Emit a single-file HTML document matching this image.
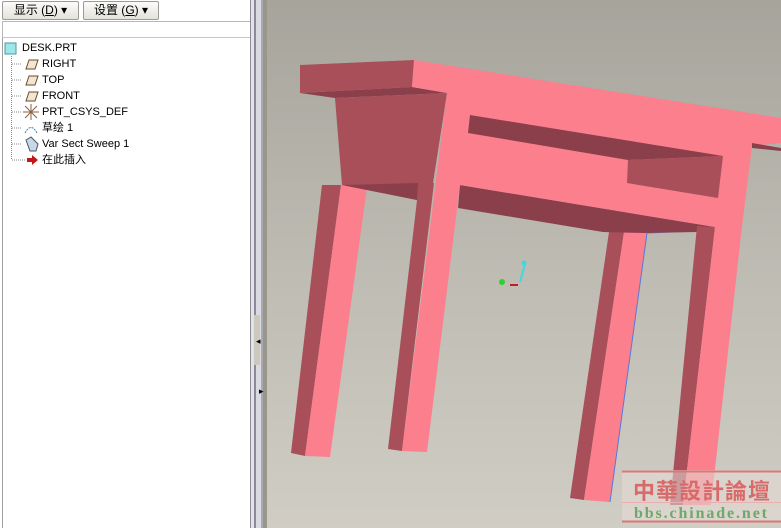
<!DOCTYPE html>
<html><head><meta charset="utf-8"><style>
*{margin:0;padding:0;box-sizing:border-box}
body{width:781px;height:528px;overflow:hidden;position:relative;background:#fff;font-family:"Liberation Sans","Noto Sans CJK SC",sans-serif;font-size:11px}
.btn{position:absolute;top:1px;height:19px;border:1px solid #9a9a9a;border-radius:2px;background:linear-gradient(#fbfbf8,#e4e2da);font-size:12px;line-height:17px;text-align:center;color:#000}
.tree{position:absolute;left:2px;top:37px;width:248px;height:491px;border-left:1px solid #a0a0a0;border-top:1px solid #c8c8c8}
.hdr{position:absolute;left:2px;top:21px;width:248px;height:17px;border:1px solid #b8b8b8;border-right:none;background:#fff}
.it{position:absolute;left:42px;height:14px;line-height:14px;white-space:nowrap}
.vp{position:absolute;left:267px;top:0;width:514px;height:528px;background:linear-gradient(#a6a49b,#bdbbb2 50%,#d0cdc4)}
</style></head><body>
<div class="btn" style="left:2px;width:77px">显示 (<u>D</u>) ▾</div>
<div class="btn" style="left:83px;width:76px">设置 (<u>G</u>) ▾</div>
<div class="hdr"></div>
<div class="tree"></div>
<svg style="position:absolute;left:0;top:0" width="250" height="170">
<g stroke="#888" stroke-dasharray="1,1" fill="none"><path d="M11.5 56V160M12 64H22M12 80H22M12 96H22M12 112H22M12 128H22M12 144H22M12 160H26"/></g>
<rect x="5" y="43" width="11" height="11" fill="#9ee6ea" stroke="#4a9aa0"/>
<g fill="#f3e6d0" stroke="#6a4a30"><path d="M26 69L29 60H38L35 69Z"/><path d="M26 85L29 76H38L35 85Z"/><path d="M26 101L29 92H38L35 101Z"/></g>
<g stroke="#8a6040" stroke-width="1"><path d="M25 106L37 118M37 106L25 118M31 104V120M23 112H39"/></g>
<path d="M25 133Q31 122 37 133" fill="none" stroke="#2a8ab0" stroke-dasharray="2,1"/>
<path d="M26 140L31 137L38 144L36 151L30 151Z" fill="#c8d8e8" stroke="#456"/>
<path d="M27 158H32V155L38 160L32 165V162H27Z" fill="#c01818"/>
</svg>
<div class="it" style="left:22px;top:41px">DESK.PRT</div>
<div class="it" style="top:57px">RIGHT</div>
<div class="it" style="top:73px">TOP</div>
<div class="it" style="top:89px">FRONT</div>
<div class="it" style="top:105px">PRT_CSYS_DEF</div>
<div class="it" style="top:121px">草绘 1</div>
<div class="it" style="top:137px">Var Sect Sweep 1</div>
<div class="it" style="top:153px">在此插入</div>
<div style="position:absolute;left:250px;top:0;width:1px;height:528px;background:#8c8c8c"></div>
<div style="position:absolute;left:251px;top:0;width:3px;height:528px;background:#e2e2ee"></div>
<div style="position:absolute;left:254px;top:0;width:2px;height:528px;background:#8a8a9a"></div>
<div style="position:absolute;left:256px;top:0;width:5px;height:528px;background:#dadae2"></div>
<div style="position:absolute;left:261px;top:0;width:2px;height:528px;background:#a8a8b0"></div>
<div style="position:absolute;left:263px;top:0;width:4px;height:528px;background:#9a968a"></div>
<div style="position:absolute;left:254px;top:315px;width:6px;height:50px;background:#ccc8bc"></div>
<div style="position:absolute;left:256px;top:336px;font-size:9px">◂</div>
<div style="position:absolute;left:259px;top:386px;font-size:9px">▸</div>
<div class="vp"></div>
<svg style="position:absolute;left:0;top:0" width="781" height="528">
<polygon points="322,185 341,185 305,456 291,453" fill="#a84f59"/>
<polygon points="341,185 367,187 330,457 305,456" fill="#fb7f8d"/>
<polygon points="609,232 624,232 584,500 570,498" fill="#a84f59"/>
<polygon points="624,232 647,232 610,502 584,500" fill="#fb7f8d"/>
<line x1="647" y1="233" x2="610" y2="502" stroke="#5a78d8" stroke-width="1"/>
<line x1="647" y1="233" x2="697" y2="231" stroke="#5a78d8" stroke-width="1"/>
<polygon points="460,185 715,227 697,232 643,233 603,232 458,208" fill="#8b3f4a"/>
<polygon points="300,93 412,87 447,93 335,98" fill="#8b3f4a"/>
<polygon points="335,98 447,93 433,183 417,200 342,185" fill="#a84f59"/>
<polygon points="342,185 418,183 417,200" fill="#8b3f4a"/>
<polygon points="419,183 434,183 402,451 388,449" fill="#a84f59"/>
<polygon points="300,65 414,60 412,87 300,93" fill="#a84f59"/>
<polygon points="697,226 715,227 683,505 670,505" fill="#a84f59"/>
<polygon points="414,60 781,118 781,143 752,146 742,226 711,505 683,505 715,227 460,185 427,452 402,451 447,93 412,87" fill="#fb7f8d"/>
<polygon points="752,143 781,148 781,151 752,148" fill="#8b3f4a"/>
<polygon points="470,115 723,156 628,160 468,133" fill="#8b3f4a"/>
<polygon points="628,160 723,156 718,198 627,183" fill="#a84f59"/>
<line x1="520" y1="282" x2="525" y2="264" stroke="#40d8e0" stroke-width="2"/>
<circle cx="524" cy="263" r="2.5" fill="#40d8e0"/>
<circle cx="502" cy="282" r="3" fill="#30d030"/>
<path d="M510 285H518" stroke="#c02020" stroke-width="2"/>
<rect x="622" y="470" width="159" height="52" fill="#e6dcd6" fill-opacity="0.55"/>
<line x1="622" y1="471.5" x2="781" y2="471.5" stroke="#d87878" stroke-width="2"/>
<line x1="622" y1="502.5" x2="781" y2="502.5" stroke="#e8b0b0" stroke-width="1"/>
<line x1="622" y1="521.5" x2="781" y2="521.5" stroke="#d87878" stroke-width="2"/>
<text x="633" y="499" font-family="Noto Sans CJK TC,sans-serif" font-weight="bold" font-size="22" fill="#d86a6a" textLength="137">中華設計論壇</text>
<text x="634" y="518" font-family="Liberation Serif,serif" font-weight="bold" font-size="16" fill="#6ea86a" textLength="133">bbs.chinade.net</text>
</svg>
</body></html>
